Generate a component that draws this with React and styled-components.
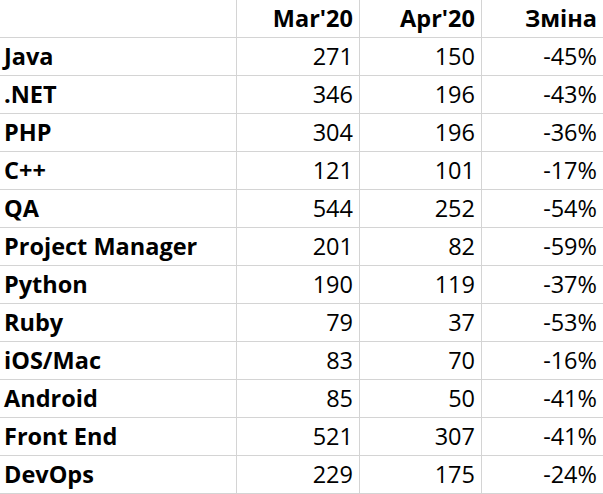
import React from "react";
import styled, { createGlobalStyle } from "styled-components";

const rows = [
  ["Java", 271, 150, "-45%"],
  [".NET", 346, 196, "-43%"],
  ["PHP", 304, 196, "-36%"],
  ["C++", 121, 101, "-17%"],
  ["QA", 544, 252, "-54%"],
  ["Project Manager", 201, 82, "-59%"],
  ["Python", 190, 119, "-37%"],
  ["Ruby", 79, 37, "-53%"],
  ["iOS/Mac", 83, 70, "-16%"],
  ["Android", 85, 50, "-41%"],
  ["Front End", 521, 307, "-41%"],
  ["DevOps", 229, 175, "-24%"],
];

const GlobalStyle = createGlobalStyle`
  html, body {
    margin: 0;
    padding: 0;
    background: #fff;
  }
`;

const Sheet = styled.div`
  display: grid;
  grid-template-columns: 237px 123px 122px 121px;
  grid-auto-rows: 38px;
  width: 603px;
  font-family: "Open Sans", "Liberation Sans", sans-serif;
  font-size: 23.5px;
  color: #000;
`;

const Cell = styled.div`
  box-sizing: border-box;
  display: flex;
  align-items: flex-end;
  justify-content: ${(p) => (p.$left ? "flex-start" : "flex-end")};
  padding: 0 6px 7px ${(p) => (p.$left ? "4px" : "0")};
  border-bottom: 1px solid #d4d4d4;
  border-right: ${(p) => (p.$last ? "none" : "1px solid #d4d4d4")};
  font-weight: ${(p) => (p.$bold ? 700 : 400)};
  line-height: 1;
  white-space: nowrap;
`;

const App = () => {
  return (
    <>
      <GlobalStyle />
      <Sheet>
        <Cell $left />
        <Cell $bold>Mar'20</Cell>
        <Cell $bold>Apr'20</Cell>
        <Cell $bold $last>Зміна</Cell>
        {rows.map((r) => (
          <React.Fragment key={r[0]}>
            <Cell $left $bold>{r[0]}</Cell>
            <Cell>{r[1]}</Cell>
            <Cell>{r[2]}</Cell>
            <Cell $last>{r[3]}</Cell>
          </React.Fragment>
        ))}
      </Sheet>
    </>
  );
};

export default App;
